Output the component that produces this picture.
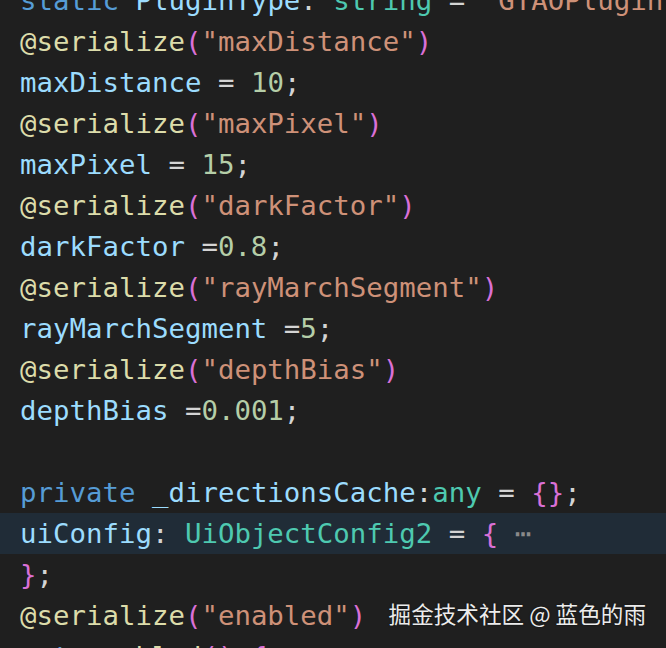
import React from "react";

type Tok = [string, string];

const KW = "text-[#569CD6]";
const VAR = "text-[#9CDCFE]";
const TYPE = "text-[#4EC9B0]";
const STR = "text-[#CE9178]";
const NUM = "text-[#B5CEA8]";
const FN = "text-[#DCDCAA]";
const BR = "text-[#DA70D6]";
const OP = "text-[#D4D4D4]";

const deco = (name: string): Tok[] => [
  ["@serialize", FN],
  ["(", BR],
  [`"${name}"`, STR],
  [")", BR],
];

const lines: { toks: Tok[]; hl?: boolean; fold?: boolean }[] = [
  {
    toks: [
      ["static", KW],
      [" ", OP],
      ["PluginType", VAR],
      [": ", OP],
      ["string", TYPE],
      [" = ", OP],
      ['"GTAOPlugin"', STR],
      [";", OP],
    ],
  },
  { toks: deco("maxDistance") },
  { toks: [["maxDistance", VAR], [" = ", OP], ["10", NUM], [";", OP]] },
  { toks: deco("maxPixel") },
  { toks: [["maxPixel", VAR], [" = ", OP], ["15", NUM], [";", OP]] },
  { toks: deco("darkFactor") },
  { toks: [["darkFactor", VAR], [" =", OP], ["0.8", NUM], [";", OP]] },
  { toks: deco("rayMarchSegment") },
  { toks: [["rayMarchSegment", VAR], [" =", OP], ["5", NUM], [";", OP]] },
  { toks: deco("depthBias") },
  { toks: [["depthBias", VAR], [" =", OP], ["0.001", NUM], [";", OP]] },
  { toks: [] },
  {
    toks: [
      ["private", KW],
      [" ", OP],
      ["_directionsCache", VAR],
      [":", OP],
      ["any", TYPE],
      [" = ", OP],
      ["{}", BR],
      [";", OP],
    ],
  },
  {
    toks: [
      ["uiConfig", VAR],
      [": ", OP],
      ["UiObjectConfig2", TYPE],
      [" = ", OP],
      ["{", BR],
    ],
    hl: true,
    fold: true,
  },
  { toks: [["}", BR], [";", OP]] },
  { toks: deco("enabled") },
  {
    toks: [
      ["get", KW],
      [" ", OP],
      ["enabled", FN],
      ["()", BR],
      [" ", OP],
      ["{", BR],
    ],
  },
];

export default function App() {
  return (
    <div className="relative w-[666px] h-[648px] overflow-hidden bg-[#1f1f1f]">
      <div
        className="-mt-[20.5px] text-[27.4px] leading-[41px] whitespace-pre"
        style={{ fontFamily: '"DejaVu Sans Mono", "Liberation Mono", monospace' }}
      >
        {lines.map((l, i) => (
          <div
            key={i}
            className={`h-[41px] pl-[20px] ${l.hl ? "bg-[#202c37]" : ""}`}
          >
            {l.toks.map(([t, c], j) => (
              <span key={j} className={c}>
                {t}
              </span>
            ))}
            {l.fold && <span className="text-[#8a8a8a]"> ⋯</span>}
          </div>
        ))}
      </div>
      <div
        className="absolute right-[20px] top-[600px] text-[22.6px] leading-[28px] text-[#ececec] whitespace-pre"
        style={{
          fontFamily: '"Noto Sans CJK SC", "Noto Sans", sans-serif',
          textShadow: "0 0 2px rgba(0,0,0,0.6)",
        }}
      >
        掘金技术社区 @ 蓝色的雨
      </div>
    </div>
  );
}
